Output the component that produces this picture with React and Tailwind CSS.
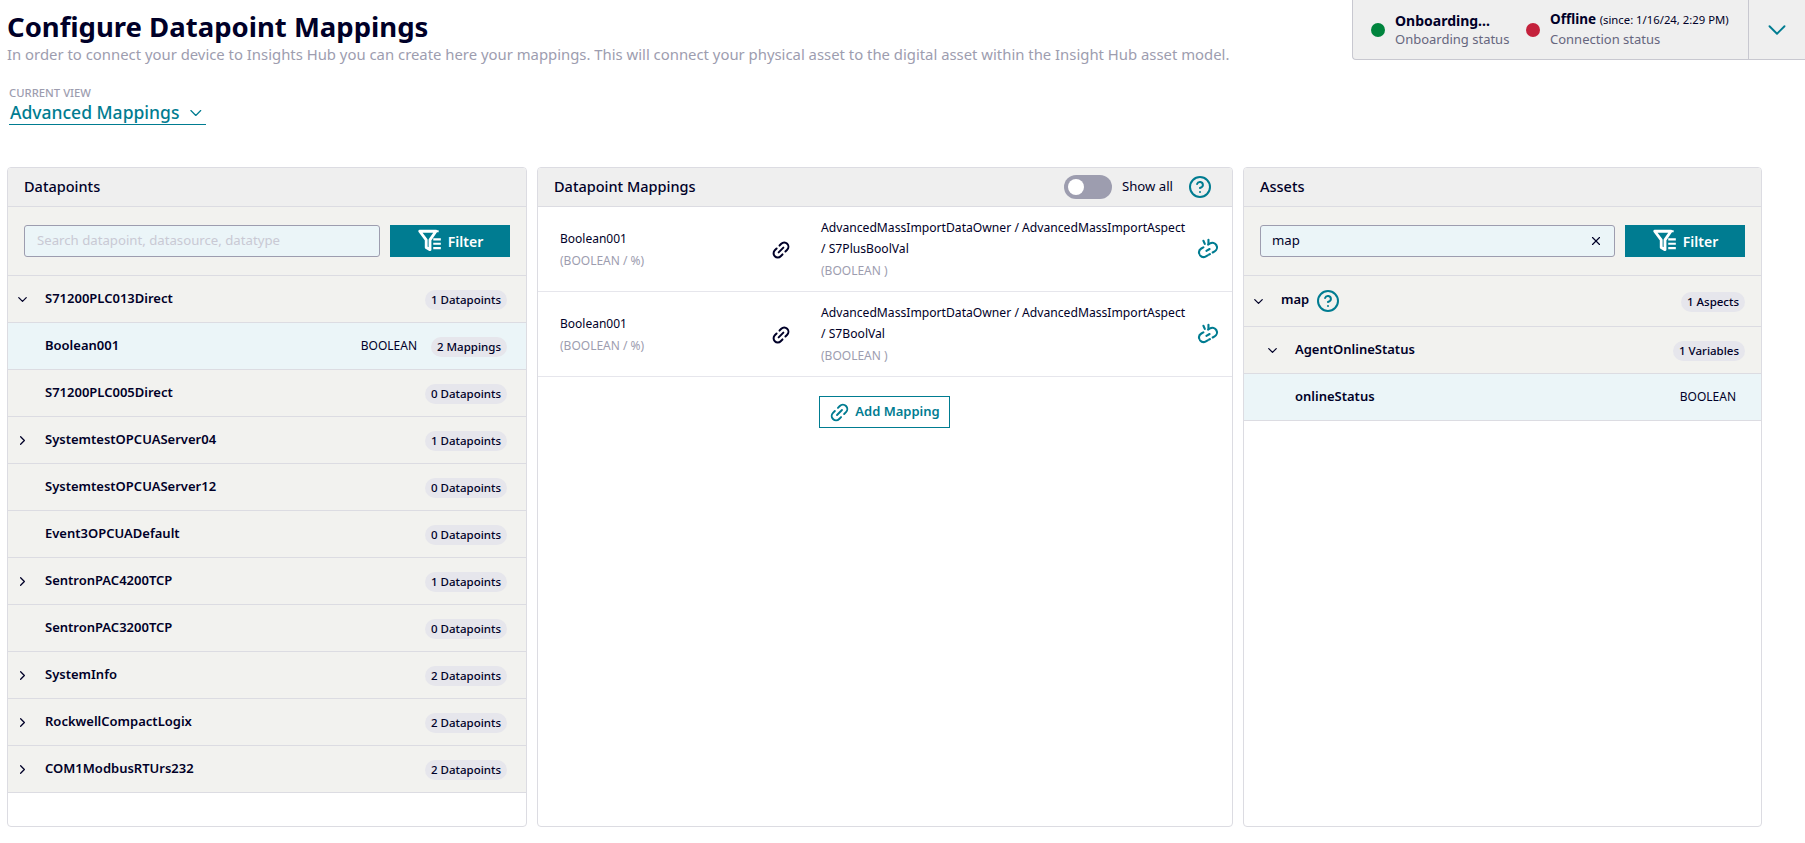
import { ChevronDown, ChevronRight, CircleHelp, X } from "lucide-react";

const FilterIcon = () => (
  <svg width="26" height="26" viewBox="0 0 24 24" className="text-white">
    <path d="M2.5 3h15l-5.5 8v9l-3.5-2v-7z" fill="none" stroke="currentColor" strokeWidth="2.6" strokeLinejoin="round" />
    <path d="M19 2v2M15 10.5h7M15 14.5h7M15 18.5h7" stroke="currentColor" strokeWidth="2" />
  </svg>
);

const LinkIcon = ({ size = 20, width = 2.4, className }) => (
  <svg width={size} height={size} viewBox="0 0 24 24" fill="none" stroke="currentColor" strokeWidth={width} strokeLinecap="round" className={className}>
    <g transform="rotate(-45 12 12)">
      <path d="M9.5 7h-3a5 5 0 0 0 0 10h3" />
      <path d="M14.5 7h3a5 5 0 0 1 0 10h-3" />
      <path d="M8 12h8" />
    </g>
  </svg>
);

const UnlinkIcon = () => (
  <svg width="22" height="22" viewBox="0 0 24 24" fill="none" stroke="currentColor" strokeWidth="2.3" strokeLinecap="round" className="shrink-0 text-[#007c91]">
    <g transform="rotate(-30 12 13)">
      <path d="M9 8H6.5a5 5 0 0 0 0 10h5" strokeDasharray="9 2 9 2" />
      <path d="M15 8h2.5a5 5 0 0 1 0 10H15" />
      <path d="M10 13h4" />
    </g>
    <path d="M7 3l1.5 3.5M12.5 2v4" />
  </svg>
);

const Badge = ({ children }) => (
  <span className="mt-[2px] h-5 rounded-full bg-[#e6e6ec] px-[6px] text-[11.5px] leading-5 font-medium whitespace-nowrap text-[#000028]">
    {children}
  </span>
);

const Row = ({ name, badge, type, open, closed, selected }) => (
  <div className={`flex h-[47px] items-center border-b border-[#dcdce2] pr-[19px] pl-[7px] ${selected ? "bg-[#ebf5f8]" : "bg-[#f2f2ef]"}`}>
    <span className="flex w-[30px] shrink-0">
      {open && <ChevronDown size={15} className="text-[#000028]" />}
      {closed && <ChevronRight size={15} className="text-[#000028]" />}
    </span>
    <span className="flex-1 text-[13px] font-semibold text-[#000028]">{name}</span>
    {type && <span className="mr-[14px] text-[12px] text-[#000028]">{type}</span>}
    <Badge>{badge}</Badge>
  </div>
);

const Toolbar = ({ value, placeholder }) => (
  <div className="flex h-[69px] items-center gap-[10px] border-b border-[#dcdce2] bg-[#f2f2ef] px-[16px]">
    <div className="flex h-[32px] flex-1 items-center rounded-[3px] border border-[#9d9daf] bg-[#ebf5f8] px-[12px] text-[13.2px]">
      {value ? <span className="-ml-[1px] flex-1 text-[#000028]">{value}</span> : <span className="text-[#c9c9d4]">{placeholder}</span>}
      {value && <X size={14} className="-mr-[1px] text-[#000028]" />}
    </div>
    <button className="flex h-[32px] w-[120px] items-center justify-center gap-[5px] bg-[#007c91] text-[14px] font-semibold text-white">
      <FilterIcon />
      Filter
    </button>
  </div>
);

const Header = ({ children }) => (
  <div className="flex h-[39px] items-center border-b border-[#dcdce2] bg-[#efefef] pl-4 text-[14.5px] font-medium text-[#000028]">
    {children}
  </div>
);

const Mapping = ({ path }) => (
  <div className="flex h-[85px] items-center border-b border-[#e6e6ec] pr-[13px] pl-[22px]">
    <div className="mt-[2px] w-[211px]">
      <p className="text-[12px] leading-[22px] text-[#000028]">Boolean001</p>
      <p className="text-[12px] leading-[22px] text-[#9d9daf]">(BOOLEAN / %)</p>
    </div>
    <LinkIcon className="mt-[2px] shrink-0 text-[#000028]" />
    <div className="ml-[30px] flex-1">
      <p className="w-[368px] text-[12.15px] leading-[21px] text-[#000028]">AdvancedMassImportDataOwner / AdvancedMassImportAspect / {path}</p>
      <p className="text-[12px] leading-[23px] text-[#9d9daf]">(BOOLEAN )</p>
    </div>
    <UnlinkIcon />
  </div>
);

const datapoints = [
  { name: "S71200PLC013Direct", badge: "1 Datapoints", open: true },
  { name: "Boolean001", badge: "2 Mappings", type: "BOOLEAN", selected: true },
  { name: "S71200PLC005Direct", badge: "0 Datapoints" },
  { name: "SystemtestOPCUAServer04", badge: "1 Datapoints", closed: true },
  { name: "SystemtestOPCUAServer12", badge: "0 Datapoints" },
  { name: "Event3OPCUADefault", badge: "0 Datapoints" },
  { name: "SentronPAC4200TCP", badge: "1 Datapoints", closed: true },
  { name: "SentronPAC3200TCP", badge: "0 Datapoints" },
  { name: "SystemInfo", badge: "2 Datapoints", closed: true },
  { name: "RockwellCompactLogix", badge: "2 Datapoints", closed: true },
  { name: "COM1ModbusRTUrs232", badge: "2 Datapoints", closed: true },
];

export default function App() {
  return (
    <div className="relative h-[843px] w-[1805px] overflow-hidden bg-white font-['Noto_Sans',sans-serif]">
      <div className="absolute top-0 right-0 flex h-[60px] w-[453px] rounded-bl-[4px] border-b border-l border-[#c8c8d0] bg-[#efefef]">
        <div className="flex flex-1 items-center pl-[18px]">
          <span className="h-[14px] w-[14px] rounded-full bg-[#00843d]" />
          <div className="ml-[10px] w-[121px]">
            <p className="text-[14px] leading-[18px] font-bold text-[#000028]">Onboarding...</p>
            <p className="text-[13px] leading-[18px] text-[#66667e]">Onboarding status</p>
          </div>
          <span className="ml-[10px] h-[14px] w-[14px] rounded-full bg-[#c4213c]" />
          <div className="ml-[10px]">
            <p className="text-[13.5px] leading-[18px] font-bold text-[#000028]">
              Offline <span className="text-[11.3px] font-normal">(since: 1/16/24, 2:29 PM)</span>
            </p>
            <p className="text-[13px] leading-[20px] text-[#66667e]">Connection status</p>
          </div>
        </div>
        <div className="flex w-[57px] items-center justify-center border-l border-[#c8c8d0]">
          <ChevronDown size={30} strokeWidth={1.5} className="text-[#007c91]" />
        </div>
      </div>

      <div className="pt-[8px] pl-[7px]">
        <h1 className="text-[27.5px] leading-[37px] font-bold text-[#000028]">Configure Datapoint Mappings</h1>
        <p className="text-[14.87px] leading-[19px] whitespace-nowrap text-[#9d9daf]">
          In order to connect your device to Insights Hub you can create here your mappings. This will connect your physical asset to the digital asset within the Insight Hub asset model.
        </p>
        <div className="mt-[21px] ml-[2px] w-[197px]">
          <p className="text-[11.3px] leading-[16px] font-medium text-[#9d9daf]">CURRENT VIEW</p>
          <div className="flex h-[24px] items-center gap-[7px] border-b border-[#007c91] pl-[1px] text-[17.5px] font-medium whitespace-nowrap text-[#007c91]">
            Advanced Mappings
            <ChevronDown size={24} strokeWidth={1.5} />
          </div>
        </div>

        <div className="mt-[42px] flex h-[660px] gap-[10px]">
          <section className="flex w-[520px] flex-col overflow-hidden rounded-[4px] border border-[#dcdce2]">
            <Header>Datapoints</Header>
            <Toolbar placeholder="Search datapoint, datasource, datatype" />
            {datapoints.map((d) => (
              <Row key={d.name} {...d} />
            ))}
          </section>

          <section className="flex w-[696px] flex-col overflow-hidden rounded-[4px] border border-[#dcdce2]">
            <Header>
              <span className="flex-1">Datapoint Mappings</span>
              <span className="relative h-[24px] w-[48px] rounded-full bg-[#9d9daf]">
                <span className="absolute top-[4px] left-[4px] h-[16px] w-[16px] rounded-full bg-white" />
              </span>
              <span className="ml-[10px] text-[13.2px] font-normal">Show all</span>
              <CircleHelp size={24} className="mr-[20px] ml-[15px] text-[#007c91]" />
            </Header>
            <Mapping path="S7PlusBoolVal" />
            <Mapping path="S7BoolVal" />
            <button className="mt-[19px] ml-[281px] flex h-[32px] w-[131px] items-center justify-center gap-[5px] border border-[#007c91] text-[13px] font-semibold text-[#007c91]">
              <LinkIcon size={21} width={2.2} />
              Add Mapping
            </button>
          </section>

          <section className="flex w-[519px] flex-col overflow-hidden rounded-[4px] border border-[#dcdce2]">
            <Header>Assets</Header>
            <Toolbar value="map" />
            <div className="flex h-[51px] items-center border-b border-[#dcdce2] bg-[#f2f2ef] pr-[16px] pl-[7px]">
              <ChevronDown size={15} className="mr-[15px] text-[#000028]" />
              <span className="mb-[3px] text-[13px] font-semibold text-[#000028]">map</span>
              <CircleHelp size={24} className="mb-[1px] ml-[7px] text-[#007c91]" />
              <span className="flex-1" />
              <Badge>1 Aspects</Badge>
            </div>
            <div className="flex h-[47px] items-center border-b border-[#dcdce2] bg-[#f2f2ef] pr-[16px] pl-[21px]">
              <ChevronDown size={15} className="mr-[15px] text-[#000028]" />
              <span className="flex-1 text-[13px] font-semibold text-[#000028]">AgentOnlineStatus</span>
              <Badge>1 Variables</Badge>
            </div>
            <div className="flex h-[47px] items-center border-b border-[#dcdce2] bg-[#ebf5f8] pr-[25px] pl-[51px]">
              <span className="flex-1 text-[13px] font-semibold text-[#000028]">onlineStatus</span>
              <span className="text-[12px] text-[#000028]">BOOLEAN</span>
            </div>
          </section>
        </div>
      </div>
    </div>
  );
}
